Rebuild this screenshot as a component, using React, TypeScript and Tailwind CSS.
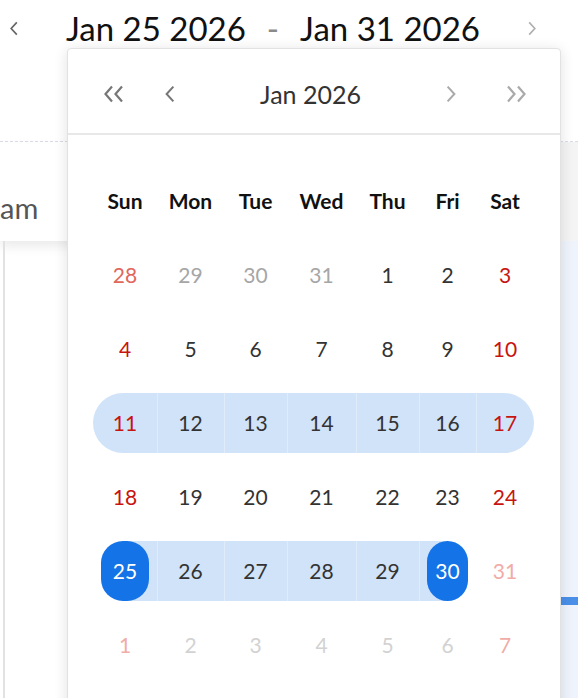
import React from "react";

type Day = { n: number; tone: "norm" | "wkd" | "prevWkd" | "prevNorm" | "nextWkd" | "nextNorm" };

const COLS = ["w-[64px]", "w-[67px]", "w-[63px]", "w-[69px]", "w-[63px]", "w-[57px]", "w-[58px]"];
const HEADS = ["Sun", "Mon", "Tue", "Wed", "Thu", "Fri", "Sat"];

const TONE: Record<Day["tone"], string> = {
  norm: "text-[#333333]",
  wkd: "text-[#c8140f]",
  prevWkd: "text-[#e0675a]",
  prevNorm: "text-[#a6a6a6]",
  nextWkd: "text-[#f0aca6]",
  nextNorm: "text-[#d2d2d2]",
};

function mkWeek(start: number, first: Day["tone"], mid: Day["tone"], last: Day["tone"]): Day[] {
  return Array.from({ length: 7 }, (_, i) => ({
    n: start + i,
    tone: i === 0 ? first : i === 6 ? last : mid,
  }));
}

const WEEKS: Day[][] = [
  [
    { n: 28, tone: "prevWkd" },
    { n: 29, tone: "prevNorm" },
    { n: 30, tone: "prevNorm" },
    { n: 31, tone: "prevNorm" },
    { n: 1, tone: "norm" },
    { n: 2, tone: "norm" },
    { n: 3, tone: "wkd" },
  ],
  mkWeek(4, "wkd", "norm", "wkd"),
  mkWeek(11, "wkd", "norm", "wkd"),
  mkWeek(18, "wkd", "norm", "wkd"),
  [...mkWeek(25, "wkd", "norm", "wkd").slice(0, 6), { n: 31, tone: "nextWkd" }],
  mkWeek(1, "nextWkd", "nextNorm", "nextWkd"),
];

function Chevron({ dir, className }: { dir: "l" | "r"; className?: string }) {
  return (
    <svg viewBox="0 0 10 16" className={className} fill="none" stroke="currentColor" strokeWidth="1.8">
      {dir === "l" ? <polyline points="8,1.5 2,8 8,14.5" /> : <polyline points="2,1.5 8,8 2,14.5" />}
    </svg>
  );
}

function DoubleChevron({ dir, className }: { dir: "l" | "r"; className?: string }) {
  return (
    <svg viewBox="0 0 22 18" className={className} fill="none" stroke="currentColor" strokeWidth="2.2">
      {dir === "l" ? (
        <>
          <polyline points="9,1.5 2.5,9 9,16.5" />
          <polyline points="19,1.5 12.5,9 19,16.5" />
        </>
      ) : (
        <>
          <polyline points="3,1.5 9.5,9 3,16.5" />
          <polyline points="13,1.5 19.5,9 13,16.5" />
        </>
      )}
    </svg>
  );
}

function WeekRow({ week, idx }: { week: Day[]; idx: number }) {
  const fullBand = idx === 2;
  const partBand = idx === 4;
  return (
    <div className="h-[74px] flex items-center">
      <div className={`flex h-[60px] ${fullBand ? "bg-[#d0e3f9] rounded-full" : ""}`}>
        {week.map((d, i) => {
          const selected = partBand && (i === 0 || i === 5);
          const inBand = partBand && i >= 1 && i <= 4;
          const divider = (fullBand && i > 0) || (partBand && i >= 1 && i <= 5);
          return (
            <div
              key={i}
              className={`${COLS[i]} relative h-full flex items-center justify-center ${inBand ? "bg-[#d0e3f9]" : ""}`}
            >
              {divider && <div className="absolute left-0 top-0 h-full w-px bg-[#e1ecfb]" />}
              {partBand && i === 0 && <div className="absolute right-0 top-0 h-full w-1/2 bg-[#d0e3f9]" />}
              {partBand && i === 5 && <div className="absolute left-px top-0 h-full w-1/2 bg-[#d0e3f9]" />}
              {selected ? (
                <div className="absolute inset-y-0 left-[8px] right-[8px] rounded-[22px] bg-[#1473e6] flex items-center justify-center text-white">
                  {d.n}
                </div>
              ) : (
                <span className={`relative ${TONE[d.tone]}`}>{d.n}</span>
              )}
            </div>
          );
        })}
      </div>
    </div>
  );
}

export default function App() {
  return (
    <div className="relative w-[578px] h-[698px] overflow-hidden bg-white font-['Lato','Liberation_Sans',sans-serif]">
      {/* Range header */}
      <div className="h-[56px] flex items-center">
        <Chevron dir="l" className="ml-[9px] w-[10px] h-[15px] text-[#666666]" />
        <div className="ml-[47px] flex items-center text-[33px] leading-none text-[#111111]">
          <span>Jan 25 2026</span>
          <span className="mx-[21px] text-[#8a8a8a]">-</span>
          <span>Jan 31 2026</span>
        </div>
        <Chevron dir="r" className="ml-auto mr-[41px] w-[10px] h-[15px] text-[#b0b0b0]" />
      </div>

      {/* background page */}
      <div className="h-[85px]" />
      <div className="border-t border-dashed border-[#d9dde6]" />
      <div className="h-[99px] flex bg-[#f4f4f4]">
        <div className="w-[300px] bg-white shadow-[0_6px_10px_rgba(0,0,0,0.08)] flex items-end pb-[19px]">
          <span className="text-[29px] leading-none text-[#555555]">am</span>
        </div>
      </div>
      <div className="flex h-[460px]">
        <div className="ml-[3px] w-[2px] bg-[#e2e2e2]" />
        <div className="flex-1" />
        <div className="w-[17px] bg-[#eef3fc] pt-[356px]">
          <div className="h-[8px] bg-[#4a8fe8]" />
        </div>
      </div>

      {/* date picker popup */}
      <div className="absolute left-[67px] top-[48px] w-[494px] h-[700px] bg-white border border-[#e2e2e2] rounded-[4px] shadow-[0_2px_14px_rgba(0,0,0,0.12)]">
        <div className="h-[86px] border-b-2 border-[#e8e8e8] flex items-center pt-[6px] pl-[35px] pr-[33px]">
          <DoubleChevron dir="l" className="w-[22px] h-[18px] text-[#777777]" />
          <Chevron dir="l" className="ml-[39px] w-[12px] h-[18px] text-[#777777]" />
          <div className="flex-1 text-center text-[25px] leading-none text-[#333333]">Jan 2026</div>
          <Chevron dir="r" className="w-[12px] h-[18px] text-[#aaaaaa]" />
          <DoubleChevron dir="r" className="ml-[48px] w-[22px] h-[18px] text-[#aaaaaa]" />
        </div>
        <div className="ml-[25px] pt-[29px] text-[21px]">
          <div className="h-[74px] flex items-center">
            {HEADS.map((h, i) => (
              <div key={h} className={`${COLS[i]} text-center font-bold text-[#111111]`}>
                {h}
              </div>
            ))}
          </div>
          {WEEKS.map((w, i) => (
            <WeekRow key={i} week={w} idx={i} />
          ))}
        </div>
      </div>
    </div>
  );
}
